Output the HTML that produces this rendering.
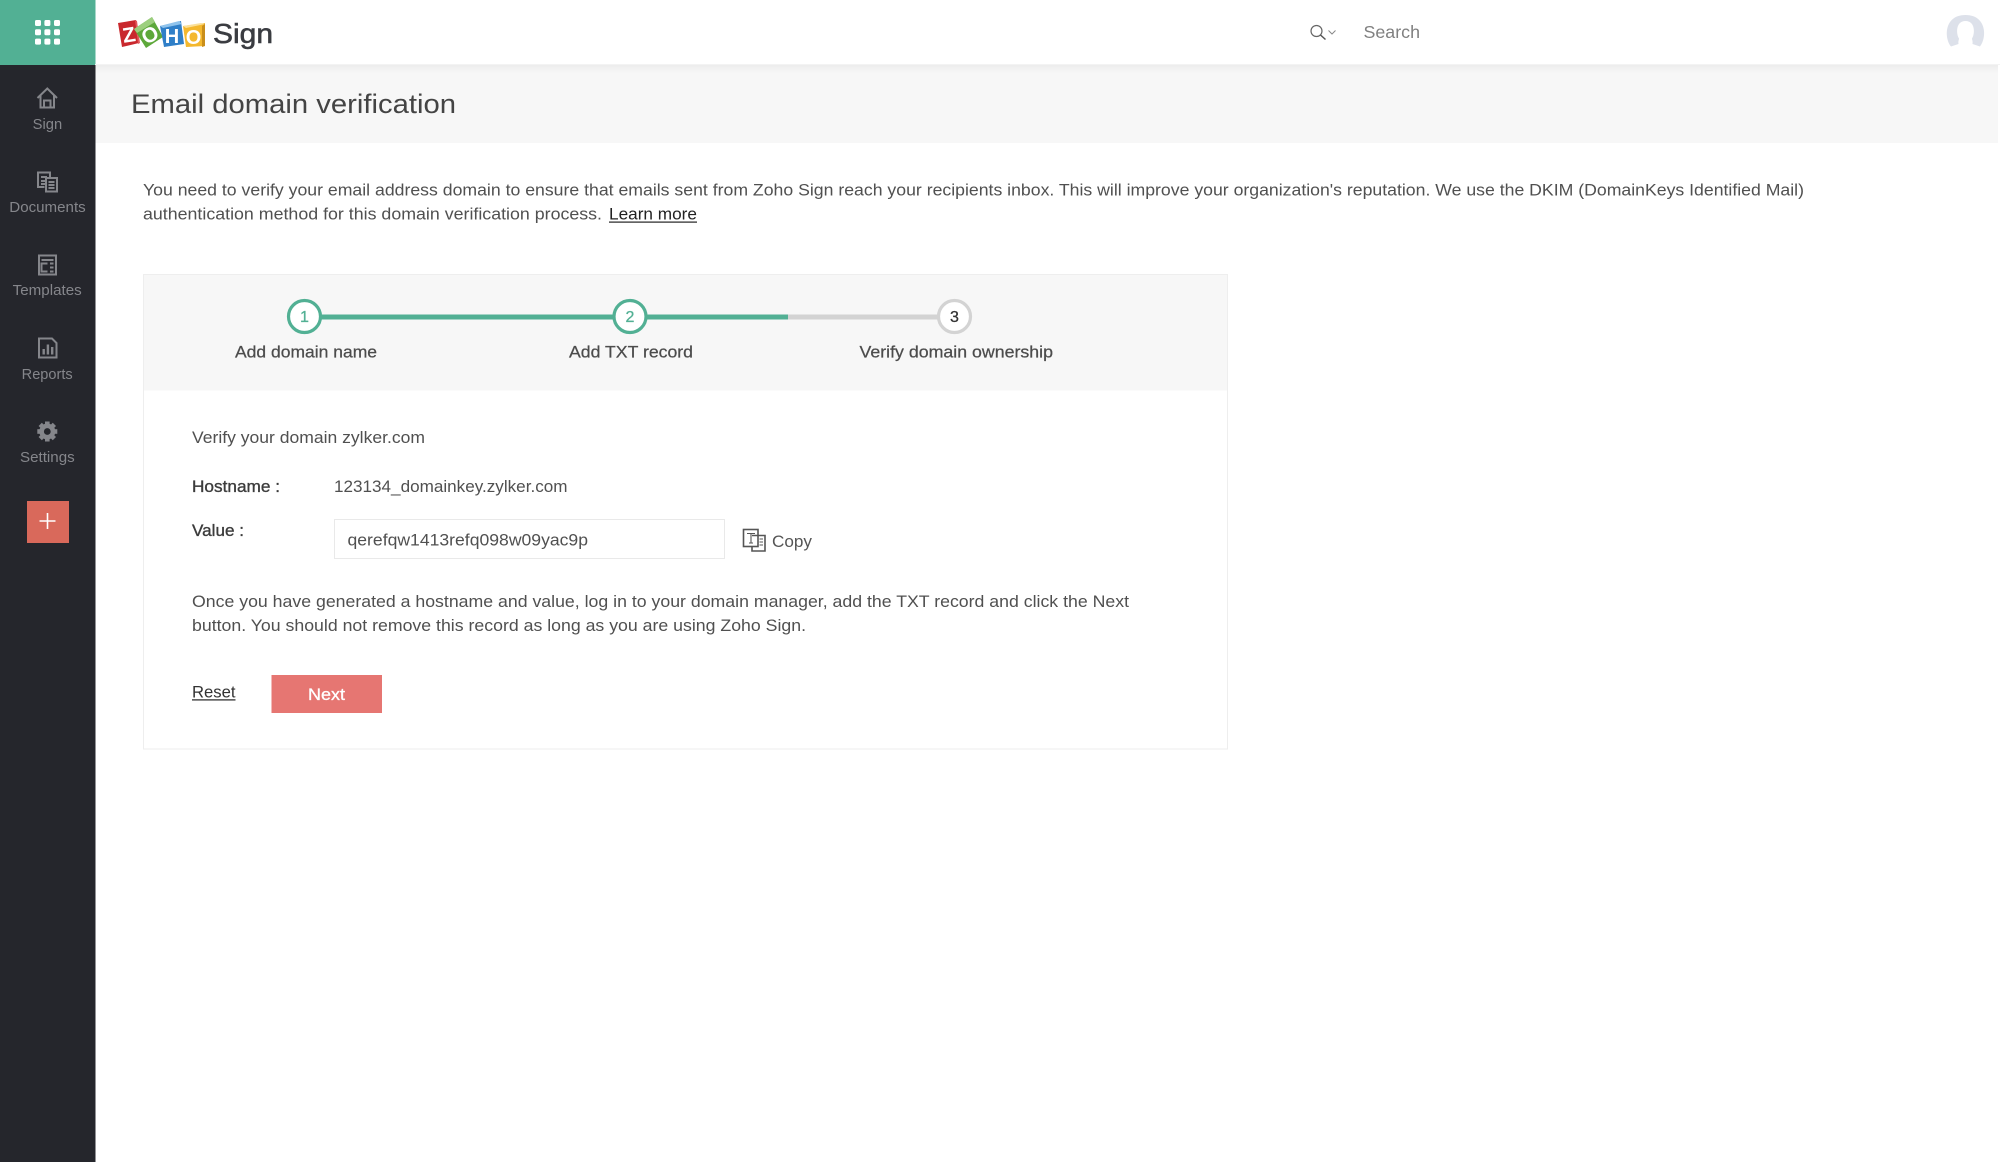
<!DOCTYPE html>
<html lang="en">
<head>
<meta charset="utf-8">
<title>Email domain verification</title>
<style>
html,body{margin:0;padding:0;background:#fff;width:2000px;height:1162px;overflow:hidden}
svg{display:block}
text{font-family:"Liberation Sans",Arial,sans-serif}
.side{font-size:14.5px;fill:#85868b}
.body{font-size:16.5px;fill:#505050}
.lbl{font-size:17px;fill:#4c4c4c;stroke:#4c4c4c;stroke-width:.25}
.ic{fill:none;stroke:#85868b;stroke-width:2}
</style>
</head>
<body>
<svg width="2000" height="1162" viewBox="0 0 2000 1162" xmlns="http://www.w3.org/2000/svg">
<defs>
<linearGradient id="shade" x1="0" y1="0" x2="0" y2="1"><stop offset="0" stop-color="#ececec"/><stop offset="1" stop-color="#f7f7f7"/></linearGradient>
</defs>
<rect width="2000" height="1162" fill="#fff"/>

<!-- title band -->
<rect x="95" y="65" width="1903" height="78" fill="#f7f7f7"/>
<rect x="95" y="65" width="1903" height="8" fill="url(#shade)"/>
<text x="131" y="113" font-size="27" fill="#444" textLength="325" lengthAdjust="spacingAndGlyphs">Email domain verification</text>

<!-- sidebar -->
<rect x="0" y="0" width="95.5" height="1162" fill="#25262c"/>
<rect x="0" y="0" width="95.5" height="65" fill="#52b094"/>
<g fill="#fff">
<rect x="35" y="20" width="6" height="6" rx="1.5"/><rect x="44.4" y="20" width="6" height="6" rx="1.5"/><rect x="54" y="20" width="6" height="6" rx="1.5"/>
<rect x="35" y="29.3" width="6" height="6" rx="1.5"/><rect x="44.4" y="29.3" width="6" height="6" rx="1.5"/><rect x="54" y="29.3" width="6" height="6" rx="1.5"/>
<rect x="35" y="38.6" width="6" height="6" rx="1.5"/><rect x="44.4" y="38.6" width="6" height="6" rx="1.5"/><rect x="54" y="38.6" width="6" height="6" rx="1.5"/>
</g>

<!-- Sign -->
<path class="ic" d="M37.5 98 47.3 88.5 57 98M40.5 95.5V107.5H54V95.5M44 107.5V100.5H50.5V107.5"/>
<text class="side" x="32.7" y="129" textLength="29.5" lengthAdjust="spacingAndGlyphs">Sign</text>
<!-- Documents -->
<path class="ic" d="M44.5 187H38V172.5H50V178M46 178H57V191.5H46ZM41 177H47M41 181H45M41 184H45M48.5 182H54.5M48.5 185H54.5M48.5 188H54.5"/>
<text class="side" x="9.3" y="212" textLength="76.4" lengthAdjust="spacingAndGlyphs">Documents</text>
<!-- Templates -->
<path class="ic" d="M39 255.5H56V274.5H39ZM41.5 260H53.5M47.5 263.5H41.5V271.5H47.5M50 263.5H53.5M50 267.5H53.5M50 271.5H53.5"/>
<text class="side" x="12.7" y="295" textLength="69" lengthAdjust="spacingAndGlyphs">Templates</text>
<!-- Reports -->
<path class="ic" d="M39 338.5H52L56.5 343V357.5H39Z"/>
<path d="M42.5 349h2.4v5.5h-2.4zM46.7 344.5h2.4v10h-2.4zM51 347h2.4v7.5H51z" fill="#85868b"/>
<text class="side" x="21.7" y="379" textLength="51" lengthAdjust="spacingAndGlyphs">Reports</text>
<!-- Settings -->
<g transform="translate(47.3 431.5)">
<circle r="5.7" fill="none" stroke="#85868b" stroke-width="4.6"/>
<g fill="#85868b"><rect x="-2.3" y="-10" width="4.6" height="4"/><rect x="-2.3" y="-10" width="4.6" height="4" transform="rotate(45)"/><rect x="-2.3" y="-10" width="4.6" height="4" transform="rotate(90)"/><rect x="-2.3" y="-10" width="4.6" height="4" transform="rotate(135)"/><rect x="-2.3" y="-10" width="4.6" height="4" transform="rotate(180)"/><rect x="-2.3" y="-10" width="4.6" height="4" transform="rotate(225)"/><rect x="-2.3" y="-10" width="4.6" height="4" transform="rotate(270)"/><rect x="-2.3" y="-10" width="4.6" height="4" transform="rotate(315)"/></g>
</g>
<text class="side" x="20" y="462" textLength="54.7" lengthAdjust="spacingAndGlyphs">Settings</text>
<!-- plus -->
<rect x="27" y="501" width="42" height="42" fill="#d9695b"/>
<path d="M47.5 513V529M39.5 521H55.5" stroke="#fff" stroke-width="1.6" fill="none"/>

<!-- top bar shadow edge -->
<rect x="95" y="64" width="1905" height="1" fill="#f3f3f3"/>

<!-- ZOHO logo -->
<g font-weight="700" text-anchor="middle" fill="#fff">
<polygon points="118,23 136,20 139,43 122,47" fill="#c9282d"/>
<polygon points="135,20 137,21 140,43 138,44" fill="#e3585b"/>
<text x="129" y="42" font-size="21" transform="rotate(-9 129 35)">Z</text>
<polygon points="134,29 152,17 163,37 146,48" fill="#5da83a"/>
<polygon points="134,29 152,17 155,22 137,33" fill="#9ccf7e"/>
<text x="150" y="42" font-size="21" transform="rotate(-28 150 35)">O</text>
<polygon points="160,26 181,21 184,44 164,47" fill="#2f7fc8"/>
<polygon points="160,26 179,21 182,24 163,28" fill="#8fc3ec"/>
<text x="172" y="43" font-size="20">H</text>
<polygon points="183,26 205,23 205,46 186,47" fill="#f4b82e"/>
<polygon points="183,26 201,23 205,24 186,28" fill="#fae09a"/>
<polygon points="202,26 205,24 205,46 202,47" fill="#c98e1b"/>
<text x="193.5" y="44" font-size="20">O</text>
</g>
<text x="213" y="43" font-size="28" fill="#3a3c41" stroke="#3a3c41" stroke-width=".6" textLength="60" lengthAdjust="spacingAndGlyphs">Sign</text>

<!-- search -->
<circle cx="1316.5" cy="31" r="5.5" fill="none" stroke="#666" stroke-width="1.2"/>
<path d="M1320.5 35 1325.5 39.5" stroke="#555" stroke-width="1.5"/>
<path d="M1328.5 30.5 1332 34 1335.5 30.5" stroke="#888" stroke-width="1" fill="none"/>
<text x="1363.5" y="38" font-size="17.5" fill="#808080" textLength="56.5" lengthAdjust="spacingAndGlyphs">Search</text>

<!-- avatar -->
<path d="M1951 46.5C1944 38 1944 15 1965.5 15 1987 15 1987 38 1980 46.5L1972.5 44C1973 41 1972 40 1972 38.5 1975 34 1975.5 21 1965.5 21 1955.5 21 1956 34 1959 38.5 1959 40 1958 41 1958.5 44Z" fill="#dde1ea"/>

<!-- intro -->
<text class="body" x="143" y="195.5" textLength="1661" lengthAdjust="spacingAndGlyphs">You need to verify your email address domain to ensure that emails sent from Zoho Sign reach your recipients inbox. This will improve your organization's reputation. We use the DKIM (DomainKeys Identified Mail)</text>
<text class="body" x="143" y="219.5" textLength="459" lengthAdjust="spacingAndGlyphs">authentication method for this domain verification process.</text>
<text x="609" y="219.5" font-size="16.5" fill="#222" textLength="88" lengthAdjust="spacingAndGlyphs">Learn more</text>
<rect x="609" y="221.5" width="88" height="1.2" fill="#222"/>

<!-- card -->
<rect x="143.5" y="274.5" width="1084" height="474.5" fill="#fff" stroke="#eee"/>
<rect x="144" y="275" width="1083" height="115.5" fill="#f7f7f7"/>

<!-- stepper -->
<rect x="320" y="314.5" width="468" height="5" fill="#52b094"/>
<rect x="788" y="314.5" width="150" height="5" fill="#d3d3d3"/>
<circle cx="304.5" cy="316.5" r="16" fill="#fff" stroke="#52b094" stroke-width="3.2"/>
<circle cx="630" cy="316.5" r="16" fill="#fff" stroke="#52b094" stroke-width="3.2"/>
<circle cx="954.5" cy="316.5" r="16" fill="#fff" stroke="#d3d3d3" stroke-width="3.2"/>
<text x="304.5" y="322" font-size="16" fill="#52b094" stroke="#52b094" stroke-width=".3" text-anchor="middle">1</text>
<text x="630" y="322" font-size="16" fill="#52b094" stroke="#52b094" stroke-width=".3" text-anchor="middle">2</text>
<text x="954.5" y="322" font-size="16" fill="#333" stroke="#333" stroke-width=".3" text-anchor="middle">3</text>
<text class="lbl" x="235" y="357.5" textLength="142" lengthAdjust="spacingAndGlyphs">Add domain name</text>
<text class="lbl" x="569" y="357.5" textLength="124" lengthAdjust="spacingAndGlyphs">Add TXT record</text>
<text class="lbl" x="859.5" y="357.5" textLength="193.5" lengthAdjust="spacingAndGlyphs">Verify domain ownership</text>

<!-- form -->
<text class="body" x="192" y="443" textLength="233" lengthAdjust="spacingAndGlyphs">Verify your domain zylker.com</text>
<text x="192" y="492" font-size="16.5" fill="#3c3c3c" stroke="#3c3c3c" stroke-width=".35" textLength="88" lengthAdjust="spacingAndGlyphs">Hostname :</text>
<text class="body" x="334" y="492" textLength="233.5" lengthAdjust="spacingAndGlyphs">123134_domainkey.zylker.com</text>
<text x="192" y="536" font-size="16.5" fill="#3c3c3c" stroke="#3c3c3c" stroke-width=".35" textLength="52" lengthAdjust="spacingAndGlyphs">Value :</text>
<rect x="334.5" y="519.5" width="390" height="39" fill="#fff" stroke="#e9e9e9"/>
<text class="body" x="347.5" y="545.5" textLength="240.5" lengthAdjust="spacingAndGlyphs">qerefqw1413refq098w09yac9p</text>

<!-- copy -->
<g fill="none" stroke="#555" stroke-width="1.6">
<rect x="743.5" y="529.5" width="14.5" height="17" fill="#fff"/>
<path d="M752 535.5H765V551H752V546.5"/>
<path d="M747 533.5H755M751 533.5V543M749 543H753M759.5 539H763M759.5 542H763M759.5 545H763" stroke-width="1.1"/>
</g>
<text x="772" y="547" font-size="16.5" fill="#555" textLength="40" lengthAdjust="spacingAndGlyphs">Copy</text>

<text class="body" x="192" y="607" textLength="937" lengthAdjust="spacingAndGlyphs">Once you have generated a hostname and value, log in to your domain manager, add the TXT record and click the Next</text>
<text class="body" x="192" y="631" textLength="614" lengthAdjust="spacingAndGlyphs">button. You should not remove this record as long as you are using Zoho Sign.</text>

<text x="192" y="697.5" font-size="16.5" fill="#333" textLength="43.5" lengthAdjust="spacingAndGlyphs">Reset</text>
<rect x="192" y="699.3" width="43.5" height="1.2" fill="#222"/>
<rect x="271.5" y="675" width="110.5" height="38" fill="#e67672"/>
<text x="308" y="700" font-size="16.5" fill="#fff" stroke="#fff" stroke-width=".3" textLength="37" lengthAdjust="spacingAndGlyphs">Next</text>
</svg>
</body>
</html>
